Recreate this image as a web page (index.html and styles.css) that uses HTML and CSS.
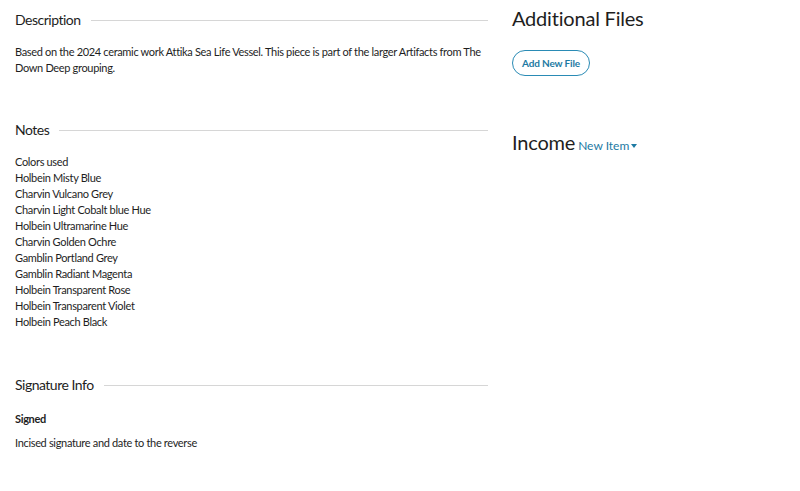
FILE: index.html
```html
<!DOCTYPE html>
<html>
<head>
<meta charset="utf-8">
<link rel="stylesheet" href="styles.css">
</head>
<body>
<div class="page">
  <div class="main">
    <section class="section">
      <div class="sec-head"><h3>Description</h3><span class="rule"></span></div>
      <p class="text">Based on the 2024 ceramic work Attika Sea Life Vessel. This piece is part of the larger Artifacts from The Down Deep grouping.</p>
    </section>
    <section class="section">
      <div class="sec-head"><h3>Notes</h3><span class="rule"></span></div>
      <div class="text">
        <div>Colors used</div>
        <div>Holbein Misty Blue</div>
        <div>Charvin Vulcano Grey</div>
        <div>Charvin Light Cobalt blue Hue</div>
        <div>Holbein Ultramarine Hue</div>
        <div>Charvin Golden Ochre</div>
        <div>Gamblin Portland Grey</div>
        <div>Gamblin Radiant Magenta</div>
        <div>Holbein Transparent Rose</div>
        <div>Holbein Transparent Violet</div>
        <div>Holbein Peach Black</div>
      </div>
    </section>
    <section class="section sig-section">
      <div class="sec-head"><h3>Signature Info</h3><span class="rule"></span></div>
      <div class="text sig">
        <div class="label">Signed</div>
        <div>Incised signature and date to the reverse</div>
      </div>
    </section>
  </div>
  <aside class="side">
    <h2 class="side-title first">Additional Files</h2>
    <button class="pill">Add New File</button>
    <div class="income">
      <h2 class="side-title">Income</h2>
      <span class="dd">New Item<span class="caret"></span></span>
    </div>
  </aside>
</div>
</body>
</html>
```
FILE: styles.css
```css
* { box-sizing: border-box; }
html, body { margin: 0; padding: 0; background: #fff; }
body {
  font-family: Lato, "Open Sans", sans-serif;
  color: #1e1e1e;
}
.page {
  display: flex;
  padding: 9px 15px 0 15px;
  gap: 24px;
}
.main {
  width: 473px;
  display: flex;
  flex-direction: column;
  gap: 43px;
}
.sig-section { margin-top: 1px; }
.sec-head {
  display: flex;
  align-items: center;
  gap: 10px;
  height: 22px;
  margin-bottom: 13px;
}
.sec-head h3 {
  margin: 0;
  font-size: 14px;
  font-weight: 400;
  line-height: 22px;
  letter-spacing: -0.5px;
  white-space: nowrap;
}
.rule {
  flex: 1;
  height: 1px;
  background: #d6d6d6;
}
.text {
  margin: 0;
  font-size: 11px;
  line-height: 16px;
  letter-spacing: -0.33px;
}
.sig { padding-top: 2px; }
.sig .label {
  font-weight: 700;
  margin-bottom: 8px;
}
.side {
  flex: 1;
  display: flex;
  flex-direction: column;
  align-items: flex-start;
}
.side-title {
  margin: 0;
  font-size: 20px;
  font-weight: 400;
  line-height: 24px;
  letter-spacing: -0.2px;
  color: #1e1e1e;
}
.side-title.first { margin-top: -3px; }
.pill {
  margin-top: 20px;
  width: 78px;
  height: 26px;
  padding: 0;
  border: 1px solid #2a8bb5;
  border-radius: 13px;
  background: #fff;
  color: #1d7aa3;
  font-family: Lato, sans-serif;
  font-size: 10px;
  font-weight: 700;
  letter-spacing: -0.15px;
}
.income {
  margin-top: 54px;
  display: flex;
  align-items: baseline;
  gap: 3px;
}
.dd {
  font-size: 12px;
  color: #1d7aa3;
  display: inline-flex;
  align-items: center;
}
.caret {
  display: inline-block;
  margin-left: 2px;
  border-left: 3.5px solid transparent;
  border-right: 3.5px solid transparent;
  border-top: 4px solid #1d7aa3;
}
```
